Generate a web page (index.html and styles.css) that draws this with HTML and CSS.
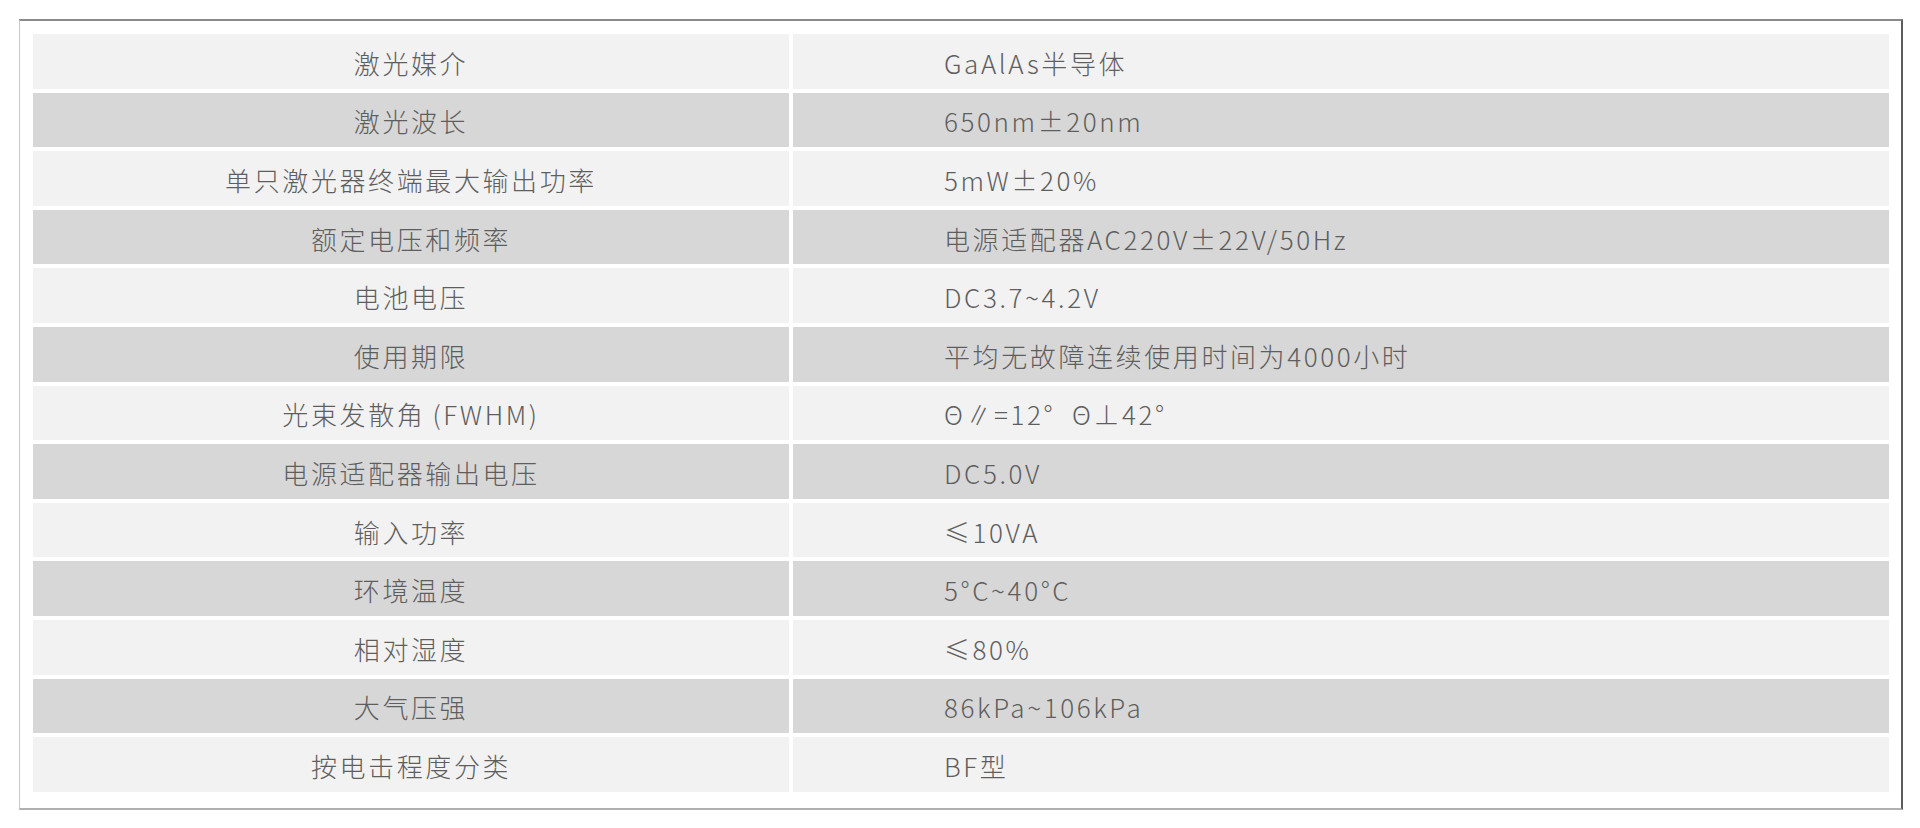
FILE: index.html
```html
<!DOCTYPE html>
<html lang="zh-CN">
<head>
<meta charset="utf-8">
<title>参数表</title>
<link rel="stylesheet" href="styles.css">
</head>
<body>
<div class="frame">
  <div class="spec">
    <div class="cell key light">激光媒介</div><div class="cell val light">GaAlAs半导体</div>
    <div class="cell key dark">激光波长</div><div class="cell val dark">650nm±20nm</div>
    <div class="cell key light">单只激光器终端最大输出功率</div><div class="cell val light">5mW±20%</div>
    <div class="cell key dark">额定电压和频率</div><div class="cell val dark">电源适配器AC220V±22V/50Hz</div>
    <div class="cell key light">电池电压</div><div class="cell val light">DC3.7~4.2V</div>
    <div class="cell key dark">使用期限</div><div class="cell val dark">平均无故障连续使用时间为4000小时</div>
    <div class="cell key light">光束发散角<span class="gap"></span>(FWHM)</div><div class="cell val light">Θ∥=12°&nbsp;&nbsp;Θ⊥42°</div>
    <div class="cell key dark">电源适配器输出电压</div><div class="cell val dark">DC5.0V</div>
    <div class="cell key light">输入功率</div><div class="cell val light">≤10VA</div>
    <div class="cell key dark">环境温度</div><div class="cell val dark">5°C~40°C</div>
    <div class="cell key light">相对湿度</div><div class="cell val light">≤80%</div>
    <div class="cell key dark">大气压强</div><div class="cell val dark">86kPa~106kPa</div>
    <div class="cell key light">按电击程度分类</div><div class="cell val light">BF型</div>
  </div>
</div>
</body>
</html>
```
FILE: styles.css
```css
html, body {
  margin: 0;
  padding: 0;
  background: #ffffff;
}
body {
  font-family: "Noto Sans CJK SC", "Noto Sans", sans-serif;
  font-weight: 200;
  color: #5e5e5e;
}
.frame {
  margin: 19px 0 0 19px;
  width: 1884px;
  height: 791px;
  box-sizing: border-box;
  border-style: solid;
  border-width: 2px 2px 2px 1px;
  border-color: #8a8a8a #5c5c5c #b0b0b0 #c8c8c8;
  padding: 13px 11px 0 13px;
}
.spec {
  display: grid;
  grid-template-columns: 756px 1096px;
  grid-auto-rows: 54.6px;
  column-gap: 4px;
  row-gap: 4px;
}
.cell {
  display: flex;
  align-items: center;
  font-size: 26px;
  letter-spacing: 2.6px;
  line-height: 30px;
  padding-top: 3px;
  box-sizing: border-box;
  white-space: nowrap;
}
.gap {
  display: inline-block;
  width: 7px;
}
.light { background: #f2f2f2; }
.dark { background: #d7d7d7; }
.key { justify-content: center; }
.val { padding-left: 151px; }
```
